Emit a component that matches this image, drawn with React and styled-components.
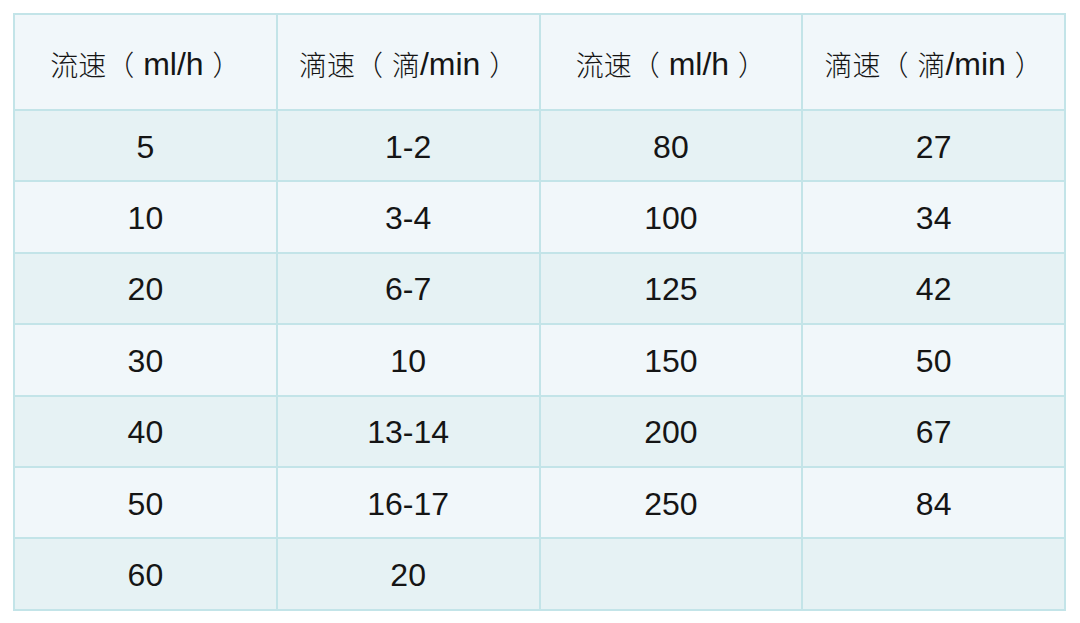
import React from "react";
import styled, { createGlobalStyle } from "styled-components";

const Global = createGlobalStyle`
  html, body { margin: 0; padding: 0; background: #ffffff; }
  body { font-family: "Liberation Sans", "Noto Sans CJK SC", sans-serif; }
`;

const Page = styled.div`
  padding: 13px 14px 0 13px;
`;

const Grid = styled.div`
  display: grid;
  grid-template-columns: repeat(4, 1fr);
  grid-template-rows: 96px repeat(7, 71.4px);
  width: 1053px;
  border-top: 2px solid #c3e4e8;
  border-left: 2px solid #c3e4e8;
  box-sizing: border-box;
`;

const Cell = styled.div`
  display: flex;
  align-items: center;
  justify-content: center;
  box-sizing: border-box;
  border-right: 2px solid #c3e4e8;
  border-bottom: 2px solid #c3e4e8;
  background: ${(p) => (p.$shade ? "#e6f2f4" : "#f1f7fa")};
  color: #151515;
  font-size: 32px;
  white-space: pre;
  padding-top: ${(p) => (p.$head ? "4px" : "3px")};
`;

const Han = styled.span`
  font-family: "Noto Sans CJK SC", sans-serif;
  font-size: 28px;
  font-weight: 300;
`;

const headers = [
  ["流速（", " ml/h ", "）"],
  ["滴速（", " ", "滴", "/min ", "）"],
  ["流速（", " ml/h ", "）"],
  ["滴速（", " ", "滴", "/min ", "）"],
];

const isHan = (s) => /[\u3000-\u9fff\uff00-\uffef]/.test(s);

const rows = [
  ["5", "1-2", "80", "27"],
  ["10", "3-4", "100", "34"],
  ["20", "6-7", "125", "42"],
  ["30", "10", "150", "50"],
  ["40", "13-14", "200", "67"],
  ["50", "16-17", "250", "84"],
  ["60", "20", "", ""],
];

export default function App() {
  return (
    <Page>
      <Global />
      <Grid>
        {headers.map((parts, i) => (
          <Cell key={"h" + i} $head>
            {parts.map((p, j) =>
              isHan(p) ? <Han key={j}>{p}</Han> : <span key={j}>{p}</span>
            )}
          </Cell>
        ))}
        {rows.map((r, ri) =>
          r.map((v, ci) => (
            <Cell key={ri + "-" + ci} $shade={ri % 2 === 0}>
              {v}
            </Cell>
          ))
        )}
      </Grid>
    </Page>
  );
}
